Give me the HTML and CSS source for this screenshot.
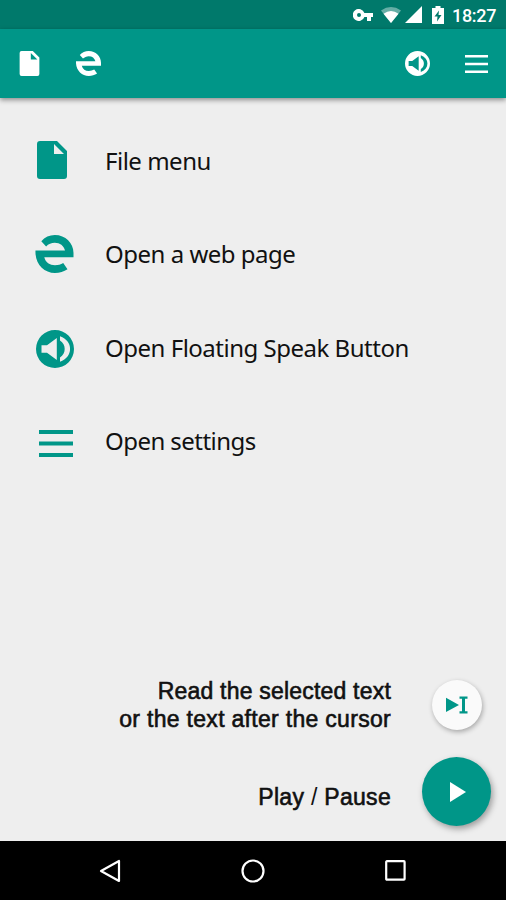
FILE: index.html
```
<!DOCTYPE html>
<html lang="en">
<head>
<meta charset="utf-8">
<title>Text reader</title>
<link rel="stylesheet" href="styles.css">
</head>
<body>
<svg class="symbols" width="0" height="0">
  <symbol id="file" viewBox="0 0 30 38"><path fill-rule="evenodd" d="M3 0H20L30 10V35Q30 38 27 38H3Q0 38 0 35V3Q0 0 3 0ZM17 3V13H27Z"/></symbol>
  <symbol id="web" viewBox="0 0 38 38"><path d="M5.8 6.2C9.3 2.2 14 0 19.3 0C30 0 38 8 38 18V22.3H8.8C10 27.5 14.3 30.3 19.5 30.3C22.5 30.3 25.3 29.5 27.7 28.1L32 34.3C28.5 36.6 24 38 19.5 38C8.2 38-.8 28.5 0 15.5H29.5C28.3 10.8 24.5 7.8 19.3 7.8C15.8 7.8 13 9.1 10.6 11.5Z"/></symbol>
  <symbol id="speak" viewBox="0 0 38 38"><path fill-rule="evenodd" d="M19 0A19 19 0 0 1 19 38A19 19 0 0 1 19 0ZM5.5 15.3V22.7H11L20.8 30V8L11 15.3ZM24 6.3V10.5C30.3 14.5 30.3 23.5 24 27.5V31.8C37.5 27 37.5 11 24 6.3Z"/></symbol>
  <symbol id="menu" viewBox="0 0 34 27"><path d="M0 0H34V4H0ZM0 11.5H34V15.5H0ZM0 23H34V27H0Z"/></symbol>
</svg>
<div class="screen">
  <div class="status">
    <svg class="key" viewBox="0 0 20 12"><path fill-rule="evenodd" d="M11.4 4A6 6 0 1 0 11.4 8H14V12H18V8H20V4ZM6 4A2 2 0 1 1 6 8A2 2 0 0 1 6 4Z"/></svg>
    <svg class="wifi" viewBox="0 0 20 16"><path opacity=".4" d="M10 16L0 3.4Q10-3.4 20 3.4Z"/><path d="M10 16L2.5 6.7Q10 1.5 17.5 6.7Z"/></svg>
    <svg class="signal" viewBox="0 0 17 17"><path d="M17 0V17H0Z"/></svg>
    <svg class="battery" viewBox="0 0 12 18"><path fill-rule="evenodd" d="M3.5 0H8.5V2H12V18H0V2H3.5ZM7 4.5L2.5 10.5H5.5L5 15.5L9.5 9H6.5Z"/></svg>
    <span class="clock">18:27</span>
  </div>
  <header class="toolbar">
    <svg class="tool-file"><use href="#file"/></svg>
    <svg class="tool-web"><use href="#web"/></svg>
    <svg class="tool-speak"><use href="#speak"/></svg>
    <svg class="tool-menu" viewBox="0 0 23 18"><path d="M0 0H23V2.5H0ZM0 7.7H23V10.2H0ZM0 15.4H23V17.9H0Z"/></svg>
  </header>
  <main>
    <ul class="guide">
      <li><span class="icon"><svg class="file"><use href="#file"/></svg></span><span class="label">File menu</span></li>
      <li><span class="icon"><svg class="web"><use href="#web"/></svg></span><span class="label">Open a web page</span></li>
      <li><span class="icon"><svg class="speak"><use href="#speak"/></svg></span><span class="label">Open Floating Speak Button</span></li>
      <li><span class="icon"><svg class="menu"><use href="#menu"/></svg></span><span class="label">Open settings</span></li>
    </ul>
    <div class="actions">
      <div class="action">
        <p><span class="first">Read the selected text</span><br>or the text after the cursor</p>
        <div class="slot"><button class="fab small" aria-label="Read selection"><svg width="22" height="18" viewBox="0 0 22 17"><path d="M0 1.3L13 8.4L0 15.5ZM13.5 0H21.5V2.2H19V14.8H21.5V17H13.5V14.8H16V2.2H13.5Z"/></svg></button></div>
      </div>
      <div class="action play">
        <p>Play <span class="slash">/</span> Pause</p>
        <div class="slot"><button class="fab" aria-label="Play"><svg width="16" height="20" viewBox="0 0 16 20"><path d="M0 0L16 10L0 20Z"/></svg></button></div>
      </div>
    </div>
  </main>
  <nav>
    <svg class="back" viewBox="0 0 22 24"><path d="M20 2V22L2 12Z"/></svg>
    <svg class="home" viewBox="0 0 24 24"><circle cx="12" cy="12" r="10.5"/></svg>
    <svg class="recent" viewBox="0 0 21 21"><rect x="1.2" y="1.2" width="18.4" height="18.4" rx=".7"/></svg>
  </nav>
</div>
</body>
</html>
```
FILE: styles.css
```
* { box-sizing: border-box; }
body { margin: 0; }
svg { display: block; flex: none; fill: currentColor; }
.symbols { display: none; }
.screen { width: 506px; height: 900px; display: flex; flex-direction: column; background: #eee; overflow: hidden; }
.status { height: 29px; display: flex; align-items: center; justify-content: flex-end; padding: 0 9px 0 0; background: #00796b; color: #fff; }
.key { width: 20px; height: 12px; margin-right: 8px; }
.wifi { width: 20px; height: 16px; margin-right: 4px; margin-top: 1px; }
.signal { width: 17px; height: 17px; margin-right: 10px; }
.battery { width: 12px; height: 18px; margin-right: 8px; }
.clock { width: 45px; font: 500 18px/29px Roboto, sans-serif; letter-spacing: -.3px; white-space: nowrap; padding-top: 2px; }
.toolbar { height: 69px; display: flex; align-items: center; padding: 0 18px 0 19px; background: #009688; color: #fff; box-shadow: 0 2px 5px rgba(0,0,0,.42); z-index: 1; }
.tool-file { width: 21px; height: 25px; margin-right: 36px; }
.tool-web { width: 25px; height: 25px; margin-right: auto; }
.tool-speak { width: 25px; height: 25px; margin-right: 35px; }
.tool-menu { width: 23px; height: 18px; }
main { flex: 1; display: flex; flex-direction: column; justify-content: space-between; padding: 15px 15px 15px 34px; }
.guide { list-style: none; margin: 0; padding: 0; }
.guide li { height: 94px; display: flex; align-items: center; }
.icon { width: 71px; color: #009688; }
.file { width: 30px; height: 38px; margin-left: 3px; }
.web { width: 39px; height: 38px; margin-left: 1px; }
.speak { width: 38px; height: 38px; margin: 2px 0 0 2px; }
.menu { width: 34px; height: 27px; margin: 2px 0 0 5px; }
.label { font: 24px/32px "Noto Sans", sans-serif; letter-spacing: -.49px; color: #111; white-space: nowrap; padding-top: 2px; }
.guide li:nth-child(n+2) .label { padding: 0; }
.guide li:nth-child(3) .label { padding-bottom: 1px; }
.guide li:nth-child(4) .label { padding-bottom: 2px; letter-spacing: -.55px; }
.action { display: flex; justify-content: flex-end; align-items: center; }
.play { margin-top: 24px; height: 69px; }
.action p { margin: 0 31px 0 0; text-align: right; font: 500 23px/28px "Liberation Sans", sans-serif; letter-spacing: .3px; color: #111; -webkit-text-stroke: .6px #111; white-space: nowrap; padding-top: 1px; }
.action .first { letter-spacing: .2px; }
.play p { padding-top: 10px; }
.slash { -webkit-text-stroke: 0; }
.slot { width: 69px; display: flex; justify-content: center; }
.fab { width: 69px; height: 69px; display: flex; align-items: center; justify-content: center; border: 0; border-radius: 50%; padding: 0 0 0 3px; background: #009688; color: #fff; box-shadow: 2px 3px 6px rgba(0,0,0,.35); }
.fab.small { width: 50px; height: 50px; padding: 0; background: #fafafa; color: #009688; box-shadow: 1px 2px 5px rgba(0,0,0,.3); }
nav { height: 59px; display: flex; align-items: center; justify-content: space-between; padding: 0 100px 0 99px; background: #000; color: #fff; }
nav svg { fill: none; stroke: currentColor; stroke-width: 2.2; stroke-linejoin: round; }
.back { width: 22px; height: 24px; }
.home { width: 24px; height: 24px; }
.recent { width: 21px; height: 21px; }
```
